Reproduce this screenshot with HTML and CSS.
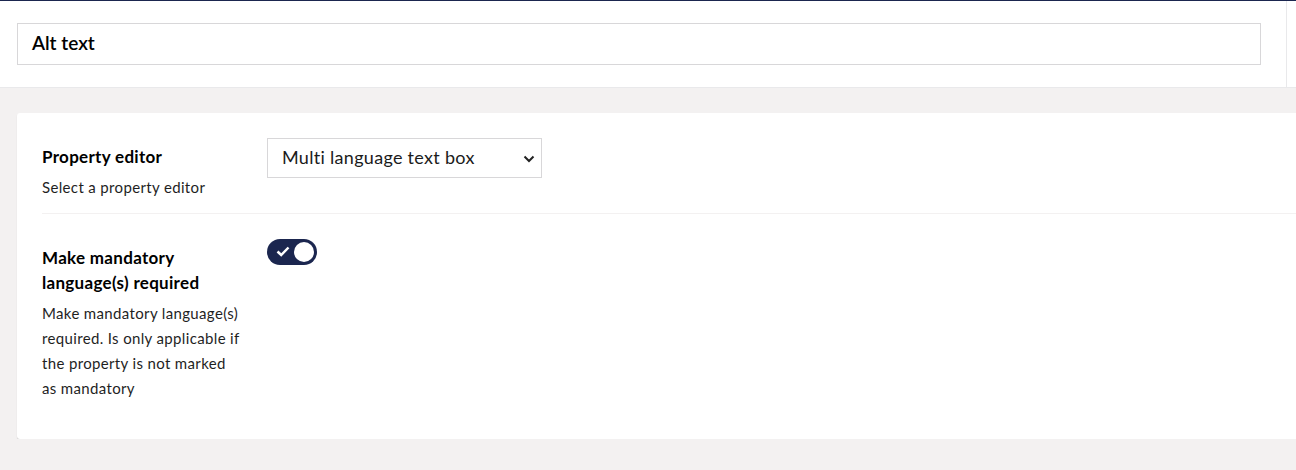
FILE: index.html
```html
<!DOCTYPE html>
<html lang="en">
<head>
  <meta charset="UTF-8">
  <title>Edit property</title>
  <link rel="stylesheet" href="styles.css">
</head>
<body>
  <div class="header">
    <div class="header-main">
      <div class="name-input">Alt text</div>
    </div>
    <div class="header-side"></div>
  </div>

  <div class="content">
    <div class="card">
      <div class="row">
        <div class="label-col">
          <div class="label">Property editor</div>
          <div class="desc">Select a property editor</div>
        </div>
        <div class="editor">
          <div class="select">
            <span>Multi language text box</span>
            <svg class="chevron" width="12" height="8" viewBox="0 0 12 8">
              <path d="M1.5 1.5 L6 6 L10.5 1.5" fill="none" stroke="#222" stroke-width="2"/>
            </svg>
          </div>
        </div>
      </div>

      <div class="row">
        <div class="label-col">
          <div class="label">Make mandatory language(s) required</div>
          <div class="desc">Make mandatory language(s) required. Is only applicable if the property is not marked as mandatory</div>
        </div>
        <div class="editor">
          <div class="toggle">
            <svg class="check" width="14" height="11" viewBox="0 0 14 11">
              <path d="M1.5 5.5 L5.2 9 L12.5 1.5" fill="none" stroke="#fff" stroke-width="2.5"/>
            </svg>
            <span class="knob"></span>
          </div>
        </div>
      </div>
    </div>
  </div>
</body>
</html>
```

FILE: styles.css
```css
body {
  margin: 0;
  font-family: Lato, "Open Sans", sans-serif;
  background: #f3f1f1;
  color: #000;
  overflow: hidden;
}

.header {
  display: flex;
  background: #fff;
  border-top: 1px solid #1b264f;
  border-bottom: 1px solid #e9e9eb;
}

.header-main {
  flex: 1;
  padding: 22px 25px 22px 17px;
  border-right: 1px solid #e9e9eb;
}

.header-side {
  width: 9px;
}

.name-input {
  height: 40px;
  border: 1px solid #d8d7d9;
  padding: 0 14px;
  font-size: 19px;
  font-weight: 600;
  line-height: 37px;
  color: #000;
}

.content {
  padding: 25px 0 0 17px;
}

.card {
  background: #fff;
  border-radius: 3px;
  box-shadow: 0 1px 1px rgba(0, 0, 0, 0.16);
  margin-right: -20px;
  padding: 25px 0 25px 25px;
}

.row {
  display: grid;
  grid-template-columns: 200px 1fr;
  column-gap: 25px;
  padding: 0 0 13px;
}

.row + .row {
  border-top: 1px solid #f3f1f1;
  padding-top: 25px;
}

.label-col {
  padding-top: 6px;
}

.label {
  font-size: 17px;
  font-weight: 700;
  letter-spacing: 0.3px;
  line-height: 25px;
}

.desc {
  margin-top: 6px;
  font-size: 15px;
  letter-spacing: 0.35px;
  line-height: 25px;
  color: #1f1f1f;
}

.select {
  width: 253px;
  height: 36px;
  border: 1px solid #d8d7d9;
  padding: 0 6px 2px 14px;
  display: flex;
  align-items: center;
  justify-content: space-between;
  font-size: 18px;
  letter-spacing: 0.3px;
  color: #1b1b1b;
}

.chevron {
  margin-top: 3px;
}

.toggle {
  position: relative;
  width: 50px;
  height: 26px;
  border-radius: 13px;
  background: #1b264f;
}

.check {
  position: absolute;
  left: 9px;
  top: 7px;
}

.knob {
  position: absolute;
  right: 3px;
  top: 3px;
  width: 20px;
  height: 20px;
  border-radius: 50%;
  background: #fff;
}
```
